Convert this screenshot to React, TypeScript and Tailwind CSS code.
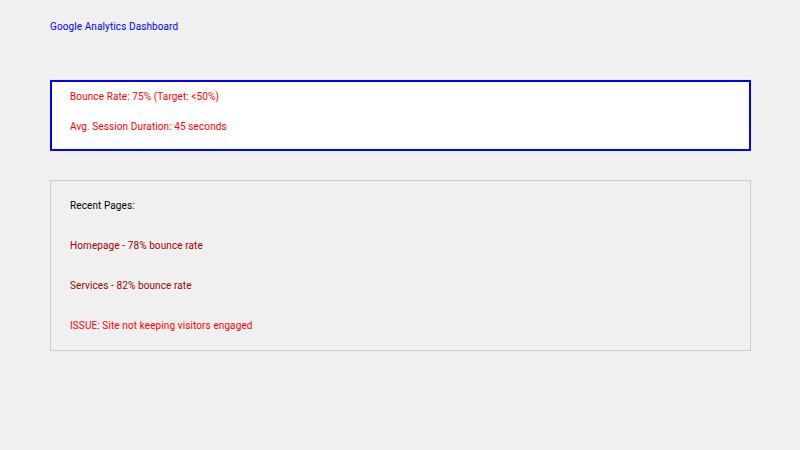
export default function App() {
  return (
    <div className="w-[800px] h-[450px] bg-[#f0f0f0] font-['Roboto',sans-serif] text-[10px] leading-[12px] tracking-[0.1px] pl-[50px]">
      <div className="pt-[21px] text-[#0000ff]">Google Analytics Dashboard</div>

      <div className="mt-[47px] w-[701px] h-[71px] border-2 border-[#0000ff] bg-white pl-[18px] pt-[9px] flex flex-col gap-[18px] text-[#ff0000]">
        <div>Bounce Rate: 75% (Target: &lt;50%)</div>
        <div>Avg. Session Duration: 45 seconds</div>
      </div>

      <div className="mt-[29px] w-[701px] h-[171px] border border-[#cccccc] pl-[19px] pt-[19px] flex flex-col gap-[28px]">
        <div className="text-black">Recent Pages:</div>
        <div className="text-[#990000]">Homepage - 78% bounce rate</div>
        <div className="text-[#990000]">Services - 82% bounce rate</div>
        <div className="text-[#ff0000]">ISSUE: Site not keeping visitors engaged</div>
      </div>
    </div>
  );
}
